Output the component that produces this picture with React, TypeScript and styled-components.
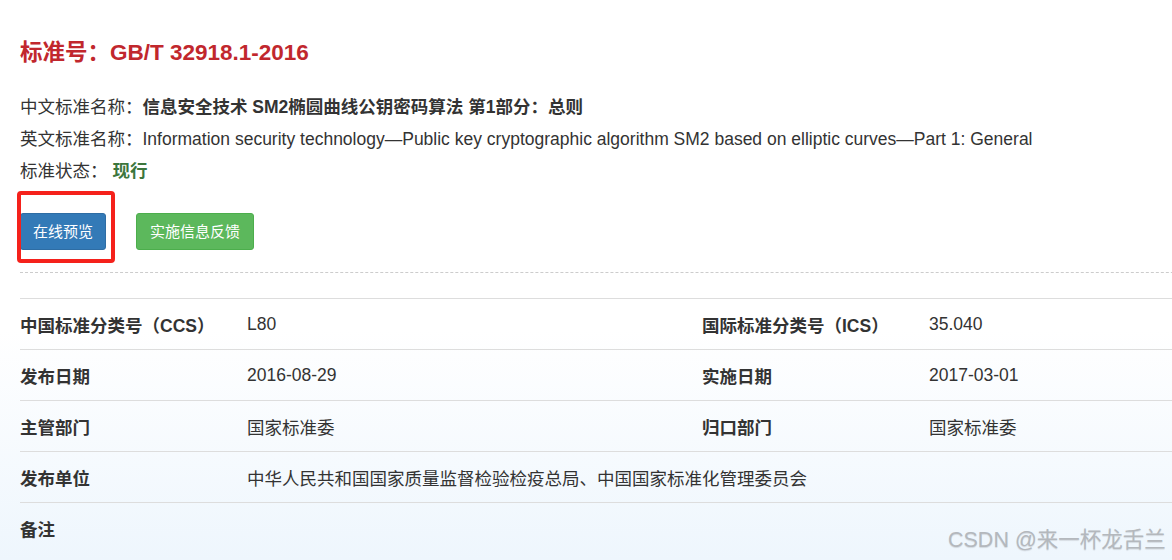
import { FC } from 'react';
import styled, { createGlobalStyle } from 'styled-components';

const GlobalStyle = createGlobalStyle`
  html, body {
    margin: 0;
    padding: 0;
    overflow: hidden;
  }
  body {
    font-family: 'Liberation Sans', 'Noto Sans CJK SC', Arial, sans-serif;
    color: #333;
    background: linear-gradient(to bottom, #fff 0, #fff 330px, #eef6fd 560px);
    min-height: 560px;
  }
`;

const Page = styled.div`
  position: relative;
  width: 1364px;
  height: 560px;
  padding: 41px 0 0 20px;
  box-sizing: border-box;
`;

const Title = styled.h2`
  margin: 0;
  font-size: 22.5px;
  line-height: 24px;
  font-weight: bold;
  color: #c1272d;
`;

const InfoList = styled.div`
  margin-top: 26px;
`;

const InfoLine = styled.div`
  display: flex;
  font-size: 17.5px;
  line-height: 32px;
  white-space: nowrap;
`;

const InfoLabel = styled.span``;

const InfoValue = styled.span<{ $bold?: boolean; $color?: string; $gap?: number }>`
  margin-left: ${(p) => p.$gap || 0}px;
  font-weight: ${(p) => (p.$bold ? 'bold' : 'normal')};
  color: ${(p) => p.$color || '#333'};
`;

const ButtonBar = styled.div`
  display: flex;
  align-items: center;
  column-gap: 30px;
  margin-top: 26px;
  padding-bottom: 22px;
  border-bottom: 1px dashed #ccc;
`;

const Highlight = styled.div`
  position: relative;
  display: flex;
`;

const RedFrame = styled.div`
  position: absolute;
  left: -3px;
  top: -22px;
  width: 90px;
  height: 64px;
  border: 4px solid #f5211b;
  border-radius: 4px;
  pointer-events: none;
`;

const Button = styled.button<{ $variant: 'primary' | 'success' }>`
  font-family: 'Liberation Sans', 'Noto Sans CJK SC', sans-serif;
  font-size: 15px;
  line-height: 21px;
  padding: 7px ${(p) => (p.$variant === 'primary' ? 12 : 13)}px;
  color: #fff;
  border-radius: 3px;
  cursor: pointer;
  background: ${(p) => (p.$variant === 'primary' ? '#337ab7' : '#5cb85c')};
  border: 1px solid ${(p) => (p.$variant === 'primary' ? '#2e6da4' : '#4cae4c')};
`;

const Table = styled.div`
  margin-top: 25px;
  display: grid;
  grid-template-columns: 227px 455px 227px 455px;
`;

const Cell = styled.div<{ $head?: boolean; $span?: number }>`
  grid-column: span ${(p) => p.$span || 1};
  height: 50px;
  display: flex;
  align-items: center;
  border-top: 1px solid #ddd;
  font-size: 17.5px;
  font-weight: ${(p) => (p.$head ? 'bold' : 'normal')};
  color: #333;
  white-space: nowrap;
`;

const Watermark = styled.div`
  position: absolute;
  left: 948px;
  top: 526px;
  font-size: 21.5px;
  line-height: 28px;
  color: #b4b8bd;
  text-shadow: 0 1px 1px rgba(0, 0, 0, 0.12);
  white-space: nowrap;
`;

interface Row {
  cells: { label: string; value: string }[];
}

const rows: Row[] = [
  {
    cells: [
      { label: '中国标准分类号（CCS）', value: 'L80' },
      { label: '国际标准分类号（ICS）', value: '35.040' },
    ],
  },
  {
    cells: [
      { label: '发布日期', value: '2016-08-29' },
      { label: '实施日期', value: '2017-03-01' },
    ],
  },
  {
    cells: [
      { label: '主管部门', value: '国家标准委' },
      { label: '归口部门', value: '国家标准委' },
    ],
  },
  {
    cells: [{ label: '发布单位', value: '中华人民共和国国家质量监督检验检疫总局、中国国家标准化管理委员会' }],
  },
  {
    cells: [{ label: '备注', value: '' }],
  },
];

const App: FC = () => {
  return (
    <>
      <GlobalStyle />
      <Page>
        <Title>标准号：GB/T 32918.1-2016</Title>

        <InfoList>
          <InfoLine>
            <InfoLabel>中文标准名称：</InfoLabel>
            <InfoValue $bold>信息安全技术 SM2椭圆曲线公钥密码算法 第1部分：总则</InfoValue>
          </InfoLine>
          <InfoLine>
            <InfoLabel>英文标准名称：</InfoLabel>
            <InfoValue>
              Information security technology—Public key cryptographic algorithm SM2 based on elliptic
              curves—Part 1: General
            </InfoValue>
          </InfoLine>
          <InfoLine>
            <InfoLabel>标准状态：</InfoLabel>
            <InfoValue $bold $color="#3c763d" $gap={5}>
              现行
            </InfoValue>
          </InfoLine>
        </InfoList>

        <ButtonBar>
          <Highlight>
            <Button $variant="primary">在线预览</Button>
            <RedFrame />
          </Highlight>
          <Button $variant="success">实施信息反馈</Button>
        </ButtonBar>

        <Table>
          {rows.map((row) =>
            row.cells.map((c) => {
              const single = row.cells.length === 1;
              return [
                <Cell key={`${c.label}-h`} $head>
                  {c.label}
                </Cell>,
                <Cell key={`${c.label}-v`} $span={single ? 3 : 1}>
                  {c.value}
                </Cell>,
              ];
            })
          )}
        </Table>

        <Watermark>CSDN @来一杯龙舌兰</Watermark>
      </Page>
    </>
  );
};

export default App;
